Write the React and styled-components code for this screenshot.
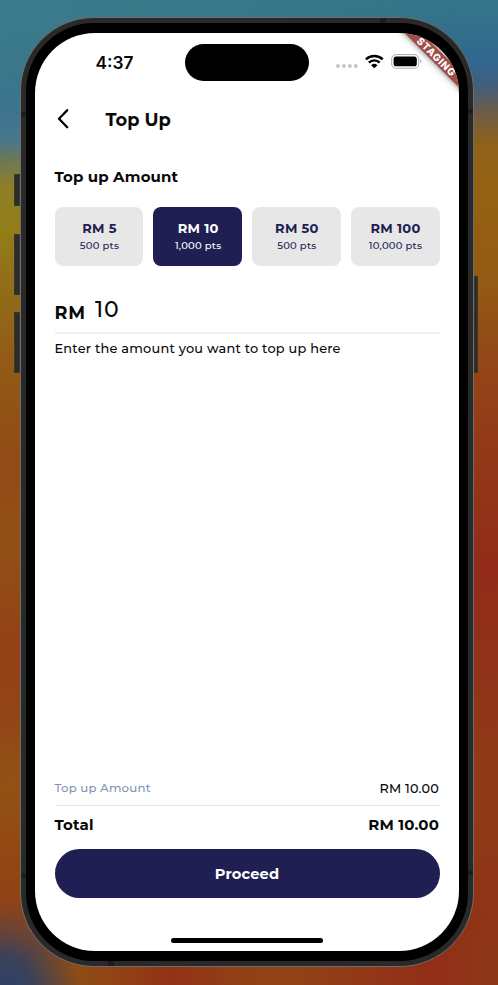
import React, { useState } from "react";
import styled, { createGlobalStyle, css } from "styled-components";

const GlobalStyle = createGlobalStyle`
  *, *::before, *::after { box-sizing: border-box; }
  body { margin: 0; font-family: Montserrat, Inter, sans-serif; -webkit-font-smoothing: antialiased; }
  button, input { font: inherit; border: 0; padding: 0; margin: 0; background: none; color: inherit; letter-spacing: inherit; }
`;

const colors = {
  navy: "#201f53",
  tile: "#e7e7e7",
  line: "#f0f0f0",
  muted: "#8494b3",
  ink: "#080808",
};

const Desktop = styled.main`
  position: relative;
  isolation: isolate;
  display: flex;
  align-items: flex-start;
  width: 498px;
  height: 985px;
  padding: 17px 0 0 14px;
  overflow: hidden;
  background: linear-gradient(176deg, #37798a 0, #34738a 50px, #316690 98px, #465d76 122px, #6b5d4a 145px, #8f611a 178px, #946112 225px, #935a14 320px, #934817 385px, #933c18 460px, #922b19 600px, #91311a 680px, #903a18 790px, #8f3918 880px, #933018 950px, #913218 985px);

  &::before {
    content: "";
    position: absolute;
    inset: 0;
    z-index: -1;
    background: linear-gradient(176deg, #3a7a8a 30px, #3a7889 60px, #3b748f 110px, #48778c 140px, #70794f 163px, #8e7e27 187px, #927d16 235px, #91701a 275px, #925d16 350px, #924a16 460px, #925016 540px, #934017 655px, #924617 720px, #925214 785px, #934714 850px, #924216 900px, #7b443a 985px);
    mask-image: linear-gradient(90deg, #000 10%, transparent 92%);
  }

  &::after {
    content: "";
    position: absolute;
    inset: auto 0 0;
    height: 130px;
    z-index: -1;
    background:
      radial-gradient(ellipse 80px 110px at 0 115%, #2c416a 10%, #3b4259 45%, transparent 100%),
      linear-gradient(90deg, #924414 0, #8c4c15 75px, #914615 105px, #923217 170px, #914016 240px, #914316 290px, #923717 370px, #922d18 430px, #8f3818 490px);
    mask-image: linear-gradient(transparent, #000 75%);
  }
`;

const SideButtons = styled.div`
  display: flex;
  flex-direction: column;
  width: 6px;
  padding-top: 157px;
`;

const SideButton = styled.span`
  width: 100%;
  height: ${(p) => p.$height}px;
  margin-bottom: ${(p) => p.$gap || 0}px;
  background: #2b2b2b;
  border: 1px solid #3c3728;
`;

const PowerRail = styled(SideButtons)`
  width: 4px;
  padding-top: 259px;
`;

const Phone = styled.section`
  position: relative;
  width: 454px;
  height: 950px;
  padding: 5px;
  background: #292929;
  border: 1px solid #6e6e6c;
  border-radius: 74px;
`;

const AntennaBand = styled.i`
  position: absolute;
  background: #1d1d1d;
  ${(p) =>
    p.$axis === "x"
      ? css`width: 6px; height: 5px; left: ${p.$at}px; ${p.$edge}: 0;`
      : css`width: 5px; height: 5px; top: ${p.$at}px; ${p.$edge}: 0;`}
`;

const Bezel = styled.div`
  height: 100%;
  padding: 10px 9px;
  background: #000;
  border-radius: 68px;
`;

const Screen = styled.div`
  position: relative;
  display: flex;
  flex-direction: column;
  height: 100%;
  overflow: hidden;
  background: #fff;
  color: ${colors.ink};
  border-radius: 60px;
`;

const StatusBar = styled.header`
  display: grid;
  grid-template-columns: 150px 124px 150px;
  height: 58px;
  padding-top: 11px;
`;

const Clock = styled.time`
  padding-left: 60.5px;
  font: 600 17.3px/37px Inter, sans-serif;
`;

const Island = styled.div`
  height: 36.5px;
  background: #000;
  border-radius: 19px;
`;

const StatusIcons = styled.div`
  display: flex;
  padding: 7px 0 0 26px;
`;

const NavBar = styled.nav`
  display: flex;
  align-items: center;
  height: 56px;
  padding-left: 19.5px;
`;

const BackButton = styled.button`
  display: flex;
  width: 51px;
`;

const Title = styled.h1`
  margin: 1px 0 0;
  font-size: 17.8px;
  font-weight: 700;
`;

const Content = styled.div`
  flex: 1;
  display: flex;
  flex-direction: column;
  padding: 0 19.5px;
`;

const SectionTitle = styled.h2`
  margin: 0;
  height: 59.5px;
  font-size: 15px;
  line-height: 59px;
  font-weight: 700;
  letter-spacing: 0.12px;
`;

const AmountGrid = styled.div`
  display: grid;
  grid-template-columns: repeat(4, 1fr);
  gap: 9.7px;
  height: 59px;
`;

const AmountTile = styled.button`
  display: flex;
  flex-direction: column;
  align-items: center;
  justify-content: center;
  gap: 2px;
  border-radius: 8px;
  padding: 1px 0 0 1px;
  background: ${(p) => (p.$selected ? colors.navy : colors.tile)};
  color: ${(p) => (p.$selected ? "#fff" : colors.navy)};
`;

const TileAmount = styled.strong`
  font-size: 13px;
  line-height: 16px;
  font-weight: 700;
  letter-spacing: 0.25px;
`;

const TilePoints = styled.span`
  font-size: 10px;
  line-height: 15px;
  font-weight: 500;
  letter-spacing: 0.22px;
`;

const AmountField = styled.label`
  display: flex;
  align-items: baseline;
  height: 68px;
  padding-top: 31.5px;
  border-bottom: 2px solid ${colors.line};
`;

const Currency = styled.span`
  width: 40.5px;
  font-size: 17.6px;
  font-weight: 700;
  letter-spacing: 0.8px;
`;

const AmountInput = styled.input`
  flex: 1;
  min-width: 0;
  height: 28px;
  font-size: 22px;
  font-weight: 500;
  letter-spacing: 0.8px;
  outline: none;
  position: relative;
  top: -2px;
`;

const Helper = styled.p`
  margin: 0;
  font-size: 12.9px;
  line-height: 30px;
  font-weight: 500;
  letter-spacing: 0.22px;
`;

const Footer = styled.footer`
  display: flex;
  flex-direction: column;
  height: 179.5px;
  margin-top: auto;
`;

const SummaryRow = styled.div`
  display: flex;
  align-items: center;
  justify-content: space-between;
  height: 34px;
  padding-right: 0.5px;
  font-size: 12.8px;
  font-weight: 500;
  letter-spacing: 0.2px;
  border-bottom: 1px solid #e6e6e6;
`;

const SummaryLabel = styled.span`
  font-size: 11.8px;
  color: ${colors.muted};
`;

const TotalRow = styled(SummaryRow)`
  height: 37px;
  margin-bottom: 6px;
  font-size: 15px;
  font-weight: 700;
  letter-spacing: 0.15px;
  border: 0;
`;

const ProceedButton = styled.button`
  height: 49px;
  padding-top: 1px;
  border-radius: 25px;
  background: ${colors.navy};
  color: #fff;
  font-size: 14.6px;
  font-weight: 700;
  letter-spacing: 0.15px;
`;

const HomeIndicator = styled.span`
  align-self: center;
  width: 152px;
  height: 5px;
  margin-top: 40px;
  background: #000;
  border-radius: 3px;
`;

const StagingRibbon = styled.div`
  position: absolute;
  top: 17.3px;
  right: -36.7px;
  width: 120px;
  height: 12px;
  padding-left: 2px;
  transform: rotate(45deg);
  background: #a24b47;
  box-shadow: 0 0 6px rgba(0, 0, 0, 0.55);
  color: #fff;
  text-align: center;
  font: 800 10px/12px Inter, sans-serif;
  letter-spacing: 0.75px;
`;

const StatusGlyphs = () => (
  <svg width="88" height="19" viewBox="0 0 88 19">
    <g fill="#c6c6c8">
      <circle cx="3" cy="15.1" r="2" />
      <circle cx="8.9" cy="15.1" r="2" />
      <circle cx="14.9" cy="15.1" r="2" />
      <circle cx="20.8" cy="15.1" r="2" />
    </g>
    <g transform="translate(30 3)" fill="none" stroke="#000" strokeWidth="2.4">
      <path d="M.9 5.4a12 12 0 0 1 16.8 0" />
      <path d="M3.9 8.6a7.7 7.7 0 0 1 10.8 0" />
      <path d="M6.1 11.2a4.7 4.7 0 0 1 6.4 0L9.3 14.3z" fill="#000" stroke="none" />
    </g>
    <rect x="56.7" y="3.6" width="27" height="13.6" rx="4.2" fill="none" stroke="#a9a9a9" />
    <rect x="58.6" y="5.5" width="23.2" height="9.8" rx="2.6" fill="#000" />
    <path d="M85.2 8.3v4.4c1.7-.7 1.7-3.7 0-4.4" fill="#a9a9a9" />
  </svg>
);

const BackChevron = () => (
  <svg width="16" height="22" viewBox="0 0 16 22" fill="none" stroke="#000" strokeWidth="2.3" strokeLinecap="round" strokeLinejoin="round">
    <path d="M12.2 2.2 4 10.7 12.2 19.2" />
  </svg>
);

const options = [
  { amount: 5, points: "500" },
  { amount: 10, points: "1,000" },
  { amount: 50, points: "500" },
  { amount: 100, points: "10,000" },
];

export default function App() {
  const [amount, setAmount] = useState("10");
  const total = `RM ${(Number(amount) || 0).toFixed(2)}`;

  return (
    <>
      <GlobalStyle />
      <Desktop>
        <SideButtons>
          <SideButton $height={32} $gap={28} />
          <SideButton $height={61} $gap={17} />
          <SideButton $height={61} />
        </SideButtons>
        <Phone>
          <AntennaBand $axis="y" $edge="left" $at={94} />
          <AntennaBand $axis="y" $edge="left" $at={855} />
          <AntennaBand $axis="y" $edge="right" $at={91} />
          <AntennaBand $axis="y" $edge="right" $at={852} />
          <AntennaBand $axis="x" $edge="top" $at={359} />
          <AntennaBand $axis="x" $edge="bottom" $at={87} />
          <Bezel>
            <Screen>
              <StatusBar>
                <Clock>4:37</Clock>
                <Island />
                <StatusIcons>
                  <StatusGlyphs />
                </StatusIcons>
              </StatusBar>
              <NavBar>
                <BackButton aria-label="Back">
                  <BackChevron />
                </BackButton>
                <Title>Top Up</Title>
              </NavBar>
              <Content>
                <SectionTitle>Top up Amount</SectionTitle>
                <AmountGrid>
                  {options.map((o) => (
                    <AmountTile key={o.amount} $selected={String(o.amount) === amount} onClick={() => setAmount(String(o.amount))}>
                      <TileAmount>RM {o.amount}</TileAmount>
                      <TilePoints>{o.points} pts</TilePoints>
                    </AmountTile>
                  ))}
                </AmountGrid>
                <AmountField>
                  <Currency>RM</Currency>
                  <AmountInput value={amount} onChange={(e) => setAmount(e.target.value)} />
                </AmountField>
                <Helper>Enter the amount you want to top up here</Helper>
                <Footer>
                  <SummaryRow>
                    <SummaryLabel>Top up Amount</SummaryLabel>
                    <span>{total}</span>
                  </SummaryRow>
                  <TotalRow>
                    <span>Total</span>
                    <span>{total}</span>
                  </TotalRow>
                  <ProceedButton>Proceed</ProceedButton>
                  <HomeIndicator />
                </Footer>
              </Content>
              <StagingRibbon>STAGING</StagingRibbon>
            </Screen>
          </Bezel>
        </Phone>
        <PowerRail>
          <SideButton $height={97} />
        </PowerRail>
      </Desktop>
    </>
  );
}
